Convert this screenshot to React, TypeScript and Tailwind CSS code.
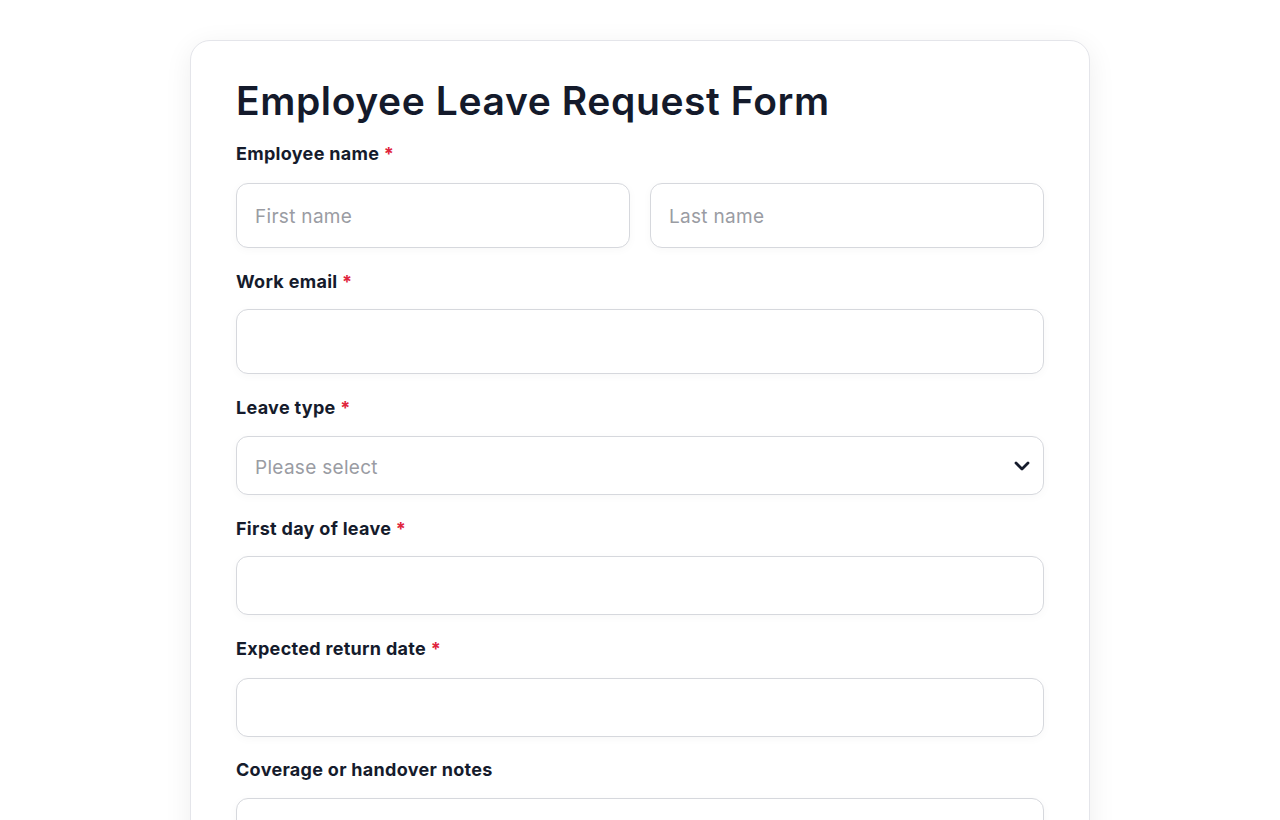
import React from "react";

const font = { fontFamily: "Inter, 'Noto Sans', sans-serif" };

function Label({ text, required, mb = "mb-[15px]", pt = "pt-px" }: { text: string; required?: boolean; mb?: string; pt?: string }) {
  return (
    <div className={`${mb} ${pt} text-[18px] leading-6 font-bold text-[#151b2c] tracking-[0.3px]`}>
      {text}
      {required && <span className="text-[#e0243c]"> *</span>}
    </div>
  );
}

const inputCls =
  "w-full rounded-[12px] border border-[#d6d8dd] bg-white px-[18px] text-[19px] tracking-[0.3px] text-[#151b2c] placeholder:text-[#9a9ca3] outline-none shadow-[0_2px_10px_rgba(0,0,0,0.03)]";

export default function App() {
  return (
    <div className="min-h-[820px] bg-white pt-10" style={font}>
      <div className="mx-auto w-[900px] rounded-[20px] border border-[#e4e5ea] bg-white px-[45px] pt-[36px] pb-10 shadow-[0_6px_28px_rgba(0,0,0,0.07)]">
        <h1 className="mb-[17px] text-[39px] leading-[48px] font-semibold text-[#141a2b] tracking-[0.6px]">
          Employee Leave Request Form
        </h1>

        <Label text="Employee name" required mb="mb-[17px]" pt="pt-0" />
        <div className="mb-[21px] flex gap-5">
          <input className={`${inputCls} h-[65px] pt-px`} placeholder="First name" />
          <input className={`${inputCls} h-[65px] pt-px`} placeholder="Last name" />
        </div>

        <Label text="Work email" required />
        <input className={`${inputCls} mb-[21px] block h-[65px]`} />

        <Label text="Leave type" required mb="mb-[16px]" />
        <div className={`${inputCls} mb-[21px] flex h-[59px] items-center justify-between pr-[13px]`}>
          <span className="pt-[5px] text-[#9a9ca3]">Please select</span>
          <svg width="16" height="10" viewBox="0 0 16 10" fill="none">
            <path d="M2 2l6 6 6-6" stroke="#151b2c" strokeWidth="2.8" strokeLinecap="round" strokeLinejoin="round" />
          </svg>
        </div>

        <Label text="First day of leave" required />
        <input className={`${inputCls} mb-[21px] block h-[59px]`} />

        <Label text="Expected return date" required mb="mb-[17px]" />
        <input className={`${inputCls} mb-[20px] block h-[59px]`} />

        <Label text="Coverage or handover notes" mb="mb-[16px]" />
        <textarea className={`${inputCls} block h-[140px] resize-none py-4`} />
      </div>
    </div>
  );
}
